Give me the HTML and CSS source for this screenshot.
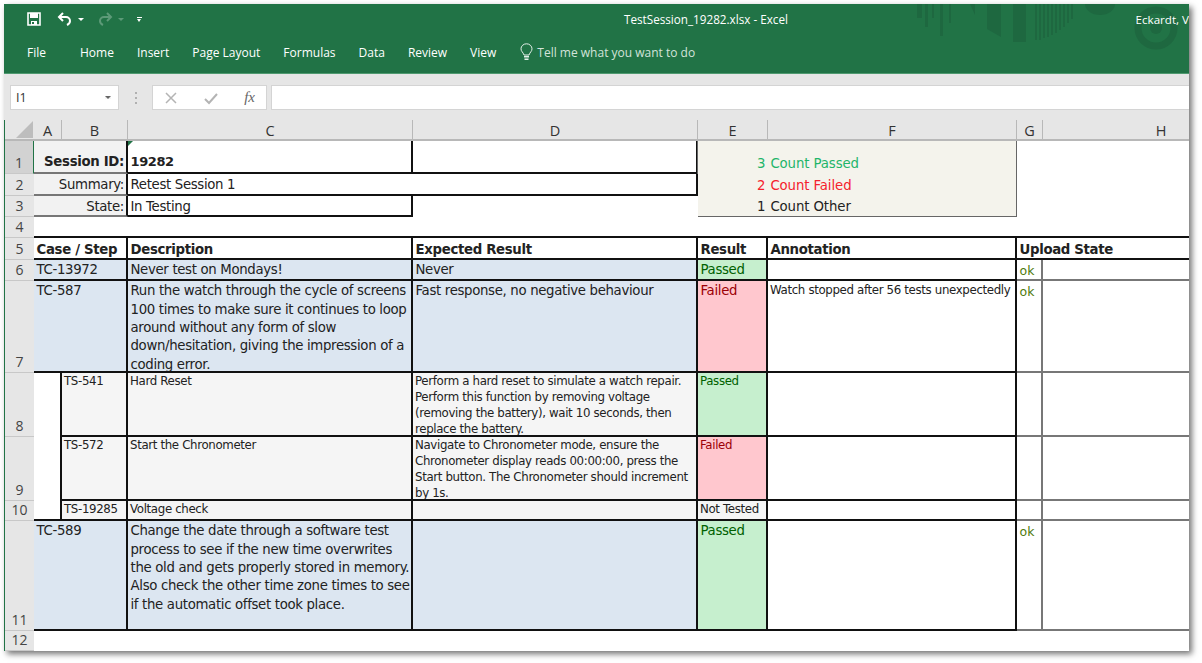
FILE: index.html
```html
<!DOCTYPE html>
<html lang="en">
  <head>
    <meta charset="UTF-8" />
    <meta name="viewport" content="width=device-width, initial-scale=1.0" />
    <title>TestSession_19282.xlsx - Excel</title>
    <link rel="stylesheet" href="styles.css">
  </head>
  <body>
    <div class="window">
      <!-- Ribbon -->
      <div class="ribbon">
        <svg class="ribbon-art" width="291" height="69" viewBox="0 0 291 69">
          <g fill="#1e6840">
            <rect x="23" y="0" width="5" height="14"/><rect x="31" y="0" width="3" height="23"/><rect x="38" y="0" width="2" height="14"/><rect x="46" y="0" width="3" height="32"/><rect x="55" y="0" width="2" height="19"/>
            <path d="M76 0h5v11z"/><path d="M93 0h14v33l-14-8z"/><rect x="119" y="0" width="13" height="38"/>
            <rect x="141" y="0" width="2" height="36"/><rect x="145" y="0" width="2" height="36"/><rect x="149" y="0" width="2" height="34"/><rect x="153" y="0" width="2" height="33"/><rect x="157" y="0" width="2" height="31"/><rect x="161" y="0" width="2" height="29"/><rect x="165" y="0" width="2" height="26"/><rect x="169" y="0" width="2" height="23"/><rect x="173" y="0" width="2" height="19"/><rect x="177" y="0" width="2" height="15"/>
            <path d="M191 0h30a15 11 0 0 1-30 0z"/>
          </g>
          <circle cx="262" cy="24" r="18" fill="none" stroke="#1e6840" stroke-width="7"/>
          <circle cx="262" cy="24" r="6" fill="#1e6840"/>
        </svg>
        <div class="title-bar">
          <div class="qat">
            <svg width="14" height="14" viewBox="0 0 14 14"><path d="M1 1h12v12H1z" fill="none" stroke="#fff" stroke-width="1.6"/><rect x="3" y="1" width="8" height="5" fill="#fff"/><rect x="4" y="9" width="6" height="4" fill="#fff"/><rect x="5" y="10" width="2" height="2" fill="#217346"/></svg>
            <svg class="undo" width="16" height="14" viewBox="0 0 16 14"><path d="M6 1L2 5l4 4" fill="none" stroke="#fff" stroke-width="2"/><path d="M2 5h7a4 4 0 0 1 4 4c0 2-1 3-3 4" fill="none" stroke="#fff" stroke-width="2"/></svg>
            <span class="caret"></span>
            <svg class="redo" width="16" height="14" viewBox="0 0 16 14"><path d="M10 1l4 4-4 4" fill="none" stroke="#5d9a78" stroke-width="2"/><path d="M14 5H7a4 4 0 0 0-4 4c0 2 1 3 3 4" fill="none" stroke="#5d9a78" stroke-width="2"/></svg>
            <span class="caret dim"></span>
            <span class="qat-more"></span>
          </div>
          <div class="doc-title">TestSession_19282.xlsx - Excel</div>
          <div class="user">Eckardt, V</div>
        </div>
        <div class="tabs">
          <span class="tab tab-file">File</span>
          <span class="tab">Home</span>
          <span class="tab">Insert</span>
          <span class="tab">Page Layout</span>
          <span class="tab">Formulas</span>
          <span class="tab">Data</span>
          <span class="tab">Review</span>
          <span class="tab">View</span>
          <span class="tell">
            <svg width="13" height="18" viewBox="0 0 13 18"><path d="M4 12C3 9 1 8.500 1 5.800a5.500 5 0 0 1 11 0C12 8.500 10 9 9 12z" fill="none" stroke="#e4efe8" stroke-width="1"/><rect x="4" y="13" width="5" height="1.500" fill="#e4efe8"/><rect x="4.500" y="15.500" width="4" height="1.500" fill="#e4efe8"/></svg>
            Tell me what you want to do
          </span>
        </div>
      </div>

      <!-- Formula bar -->
      <div class="formula-bar">
        <div class="name-box"><span>I1</span><span class="caret grey"></span></div>
        <div class="grip"><i></i><i></i><i></i></div>
        <div class="fx-box">
          <svg width="14" height="14" viewBox="0 0 14 14"><path d="M2 2l10 10M12 2L2 12" stroke="#b4b4b4" stroke-width="1.500"/></svg>
          <svg width="16" height="14" viewBox="0 0 16 14"><path d="M2 8l4 4 8-9" fill="none" stroke="#b4b4b4" stroke-width="2"/></svg>
          <span class="fx">fx</span>
        </div>
        <div class="formula-input"></div>
      </div>

      <!-- Sheet -->
      <div class="sheet">
        <div class="corner">
          <svg width="17" height="17" viewBox="0 0 17 17"><polygon points="17,0 17,17 0,17" fill="#bdbdbd"/></svg>
        </div>
        <div class="col-head">A</div>
        <div class="col-head">B</div>
        <div class="col-head">C</div>
        <div class="col-head">D</div>
        <div class="col-head">E</div>
        <div class="col-head">F</div>
        <div class="col-head">G</div>
        <div class="col-head col-last">H</div>

        <div class="row-head row-active">1</div>
        <div class="cell span2 label bold session-label">Session ID:</div>
        <div class="cell bold session-id box"><span class="cell-mark"></span>19282</div>
        <div class="cell box"></div>
        <div class="cell counts">
          <div class="count passed"><span>3</span>Count Passed</div>
          <div class="count failed"><span>2</span>Count Failed</div>
          <div class="count other"><span>1</span>Count Other</div>
        </div>
        <div class="cell span2 rows3"></div>

        <div class="row-head">2</div>
        <div class="cell span2 label">Summary:</div>
        <div class="cell span2 box meta">Retest Session 1</div>

        <div class="row-head">3</div>
        <div class="cell span2 label">State:</div>
        <div class="cell box meta">In Testing</div>
        <div class="cell"></div>

        <div class="row-head">4</div>
        <div class="cell span8 rule-b"></div>

        <div class="row-head">5</div>
        <div class="cell span2 bold box head">Case / Step</div>
        <div class="cell bold box head">Description</div>
        <div class="cell bold box head">Expected Result</div>
        <div class="cell bold box head">Result</div>
        <div class="cell bold box head">Annotation</div>
        <div class="cell span2 bold rule-b head">Upload State</div>

        <div class="row-head">6</div>
        <div class="cell span2 box blue">TC-13972</div>
        <div class="cell box blue">Never test on Mondays!</div>
        <div class="cell box blue">Never</div>
        <div class="cell box pass">Passed</div>
        <div class="cell box"></div>
        <div class="cell line-r line-b ok">ok</div>
        <div class="cell line-b"></div>

        <div class="row-head row-tall">7</div>
        <div class="cell span2 box blue">TC-587</div>
        <div class="cell box blue wrap">Run the watch through the cycle of screens 100 times to make sure it continues to loop around without any form of slow down/hesitation, giving the impression of a coding error.</div>
        <div class="cell box blue">Fast response, no negative behaviour</div>
        <div class="cell box fail">Failed</div>
        <div class="cell box small note">Watch stopped after 56 tests unexpectedly</div>
        <div class="cell line-r line-b ok">ok</div>
        <div class="cell line-b"></div>

        <div class="row-head row-tall">8</div>
        <div class="cell rows3 box"></div>
        <div class="cell box grey small">TS-541</div>
        <div class="cell box grey small">Hard Reset</div>
        <div class="cell box grey small wrap">Perform a hard reset to simulate a watch repair. Perform this function by removing voltage (removing the battery), wait 10 seconds, then replace the battery.</div>
        <div class="cell box pass small">Passed</div>
        <div class="cell box"></div>
        <div class="cell line-r line-b"></div>
        <div class="cell line-b"></div>

        <div class="row-head row-tall">9</div>
        <div class="cell box grey small">TS-572</div>
        <div class="cell box grey small">Start the Chronometer</div>
        <div class="cell box grey small wrap">Navigate to Chronometer mode, ensure the Chronometer display reads 00:00:00, press the Start button. The Chronometer should increment by 1s.</div>
        <div class="cell box fail small">Failed</div>
        <div class="cell box"></div>
        <div class="cell line-r line-b"></div>
        <div class="cell line-b"></div>

        <div class="row-head">10</div>
        <div class="cell box grey small">TS-19285</div>
        <div class="cell box grey small">Voltage check</div>
        <div class="cell box grey small"></div>
        <div class="cell box grey small">Not Tested</div>
        <div class="cell box"></div>
        <div class="cell line-r line-b"></div>
        <div class="cell line-b"></div>

        <div class="row-head row-tall">11</div>
        <div class="cell span2 box blue">TC-589</div>
        <div class="cell box blue wrap">Change the date through a software test process to see if the new time overwrites the old and gets properly stored in memory. Also check the other time zone times to see if the automatic offset took place.</div>
        <div class="cell box blue"></div>
        <div class="cell box pass">Passed</div>
        <div class="cell box"></div>
        <div class="cell line-r line-b ok">ok</div>
        <div class="cell line-b"></div>

        <div class="row-head">12</div>
        <div class="cell span8"></div>
      </div>
    </div>
  </body>
</html>
```

FILE: styles.css
```css
html,
body {
  margin: 0;
  height: 100%;
  background: white;
  overflow: hidden;
}
body {
  padding: 4px 0 0 4px;
  box-sizing: border-box;
  font-family: "DejaVu Sans", sans-serif;
  color: #222;
}
.window {
  width: 1185px;
  height: 647px;
  box-shadow: 3px 3px 6px rgba(0, 0, 0, 0.55);
  background: white;
  display: flex;
  flex-direction: column;
  overflow: hidden;
}

/* Ribbon */
.ribbon {
  height: 70px;
  box-sizing: border-box;
  background: #217346;
  border-bottom: 1px solid #4f9a70;
  color: white;
  font-family: "Open Sans", sans-serif;
  font-size: 12px;
  position: relative;
}
.ribbon-art {
  position: absolute;
  top: 0;
  left: 890px;
}
.title-bar {
  height: 30px;
  display: flex;
  align-items: center;
  position: relative;
}
.qat {
  width: 620px;
  display: flex;
  align-items: center;
  padding-left: 23px;
  box-sizing: border-box;
}
.undo {
  margin-left: 16px;
}
.redo {
  margin-left: 13px;
}
.caret {
  width: 0;
  height: 0;
  margin-left: 5px;
  border-left: 3px solid transparent;
  border-right: 3px solid transparent;
  border-top: 3px solid white;
}
.caret.dim {
  border-top-color: #5d9a78;
}
.caret.grey {
  border-top-color: #666;
  margin-left: 0;
}
.qat-more {
  width: 5px;
  height: 3px;
  margin-left: 13px;
  border-top: 1px solid white;
  position: relative;
}
.qat-more::after {
  content: "";
  position: absolute;
  top: 1px;
  left: 0;
  border-left: 2.500px solid transparent;
  border-right: 2.500px solid transparent;
  border-top: 3px solid white;
}
.doc-title {
  font-size: 11.7px;
}
.user {
  margin-left: auto;
  white-space: nowrap;
  font-size: 11.6px;
}
.tabs {
  display: flex;
  align-items: center;
  height: 36px;
  padding-left: 23px;
  gap: 23px;
  position: relative;
}
.tab-file {
  margin-right: 11px;
}
.tell {
  display: flex;
  align-items: center;
  gap: 4px;
  color: #d3e3da;
  margin-left: 1px;
}

/* Formula bar */
.formula-bar {
  height: 46px;
  box-sizing: border-box;
  background: #e6e6e6;
  display: flex;
  align-items: center;
  padding: 1px 0 0 6px;
  font-family: "Open Sans", sans-serif;
}
.name-box {
  width: 109px;
  height: 25px;
  box-sizing: border-box;
  background: white;
  border: 1px solid #d4d4d4;
  display: flex;
  align-items: center;
  justify-content: space-between;
  padding: 0 7px 0 5px;
  font-size: 12.5px;
  color: #333;
}
.grip {
  width: 33px;
  display: flex;
  flex-direction: column;
  align-items: center;
  gap: 3px;
}
.grip i {
  width: 2px;
  height: 2px;
  background: #b0b0b0;
}
.fx-box {
  width: 115px;
  height: 25px;
  box-sizing: border-box;
  background: white;
  border: 1px solid #d4d4d4;
  display: flex;
  align-items: center;
  justify-content: space-between;
  padding: 0 11px 0 11px;
}
.fx {
  font-family: "Liberation Serif", serif;
  font-style: italic;
  font-size: 15px;
  color: #666;
}
.formula-input {
  flex: 1;
  height: 25px;
  margin-left: 4px;
  box-sizing: border-box;
  background: white;
  border: 1px solid #d4d4d4;
  border-right: none;
}

/* Sheet */
.sheet {
  flex: 1;
  display: grid;
  grid-template-columns: 29px 28px 66px 285px 285px 70px 249px 26px 146px;
  grid-template-rows: 21px 33px 22px 21px 21px 22px 21px 92px 64px 64px 20px 110px 20px;
  font-size: 13.3px;
  letter-spacing: -0.33px;
  border-left: 1px solid #217346;
}
.corner {
  background: #e6e6e6;
  border-bottom: 2px solid #b8b8b8;
  display: flex;
  align-items: flex-end;
  justify-content: flex-end;
  padding: 0 1px 1px 0;
  box-sizing: border-box;
}
.col-head {
  background: #e6e6e6;
  border-bottom: 2px solid #b8b8b8;
  border-right: 1px solid #b8b8b8;
  font-family: "Open Sans", sans-serif;
  font-size: 14.5px;
  letter-spacing: 0;
  color: #333;
  text-align: center;
  line-height: 22px;
}
.col-last {
  border-right: none;
  padding-left: 90px;
}
.row-head {
  background: #e6e6e6;
  border-bottom: 1px solid #c8c8c8;
  font-family: "Open Sans", sans-serif;
  font-size: 14px;
  letter-spacing: 0;
  color: #444;
  display: flex;
  align-items: flex-end;
  justify-content: center;
  line-height: 20px;
}
.row-active {
  background: #d2d2d2;
  border-right: 1px solid #217346;
}
.cell {
  box-sizing: border-box;
  padding: 0 2px 0 2.500px;
  white-space: nowrap;
  overflow: hidden;
  line-height: 19px;
  background: white;
  position: relative;
}
.span2 {
  grid-column: span 2;
}
.span8 {
  grid-column: span 8;
}
.rows3 {
  grid-row: span 3;
}
.wrap {
  white-space: normal;
  line-height: 18.300px;
  padding: 1.400px 0 0 2.500px;
}
.small.wrap {
  line-height: 16px;
  padding-top: 0;
}
.bold {
  font-weight: bold;
}
.small {
  font-size: 11.8px;
  letter-spacing: -0.35px;
  line-height: 16px;
  padding-left: 2px;
}
.note {
  padding-top: 1px;
}
.box {
  border-right: 2px solid #111;
  border-bottom: 2px solid #111;
}
.rule-b {
  border-bottom: 2px solid #111;
}
.line-b {
  border-bottom: 2px solid #777;
}
.line-r {
  border-right: 2px solid #777;
}
.label {
  background: #f2f2f2;
  text-align: right;
  border-right: 2px solid #111;
  border-bottom: 2px solid #777;
  line-height: 21px;
}
.meta {
  line-height: 21px;
}
.head {
  line-height: 24px;
}
.session-label,
.session-id {
  padding-top: 11px;
  line-height: 20px;
}
.cell-mark {
  position: absolute;
  top: 0;
  left: 0;
  border-top: 5px solid #217346;
  border-right: 5px solid transparent;
}
.session-id {
  font-size: 13px;
  letter-spacing: -0.4px;
}
.blue {
  background: #dce6f1;
}
.grey {
  background: #f5f5f5;
}
.pass {
  background: #c6efce;
  color: #006100;
}
.fail {
  background: #ffc7ce;
  color: #9c0006;
}
.ok {
  color: #4e7a0c;
  font-size: 12.5px;
  letter-spacing: 0;
  padding-top: 1px;
}
.counts {
  grid-column: span 2;
  grid-row: span 3;
  margin-left: -1px;
  background: #f4f3ec;
  border: 1px solid #666;
  border-top: none;
  padding: 12px 0 0 59px;
  line-height: 21.500px;
  letter-spacing: -0.1px;
}
.count span {
  margin-right: 5px;
}
.passed {
  color: #1fb56a;
}
.failed {
  color: #f5222d;
}
.other {
  color: #222;
}
```
